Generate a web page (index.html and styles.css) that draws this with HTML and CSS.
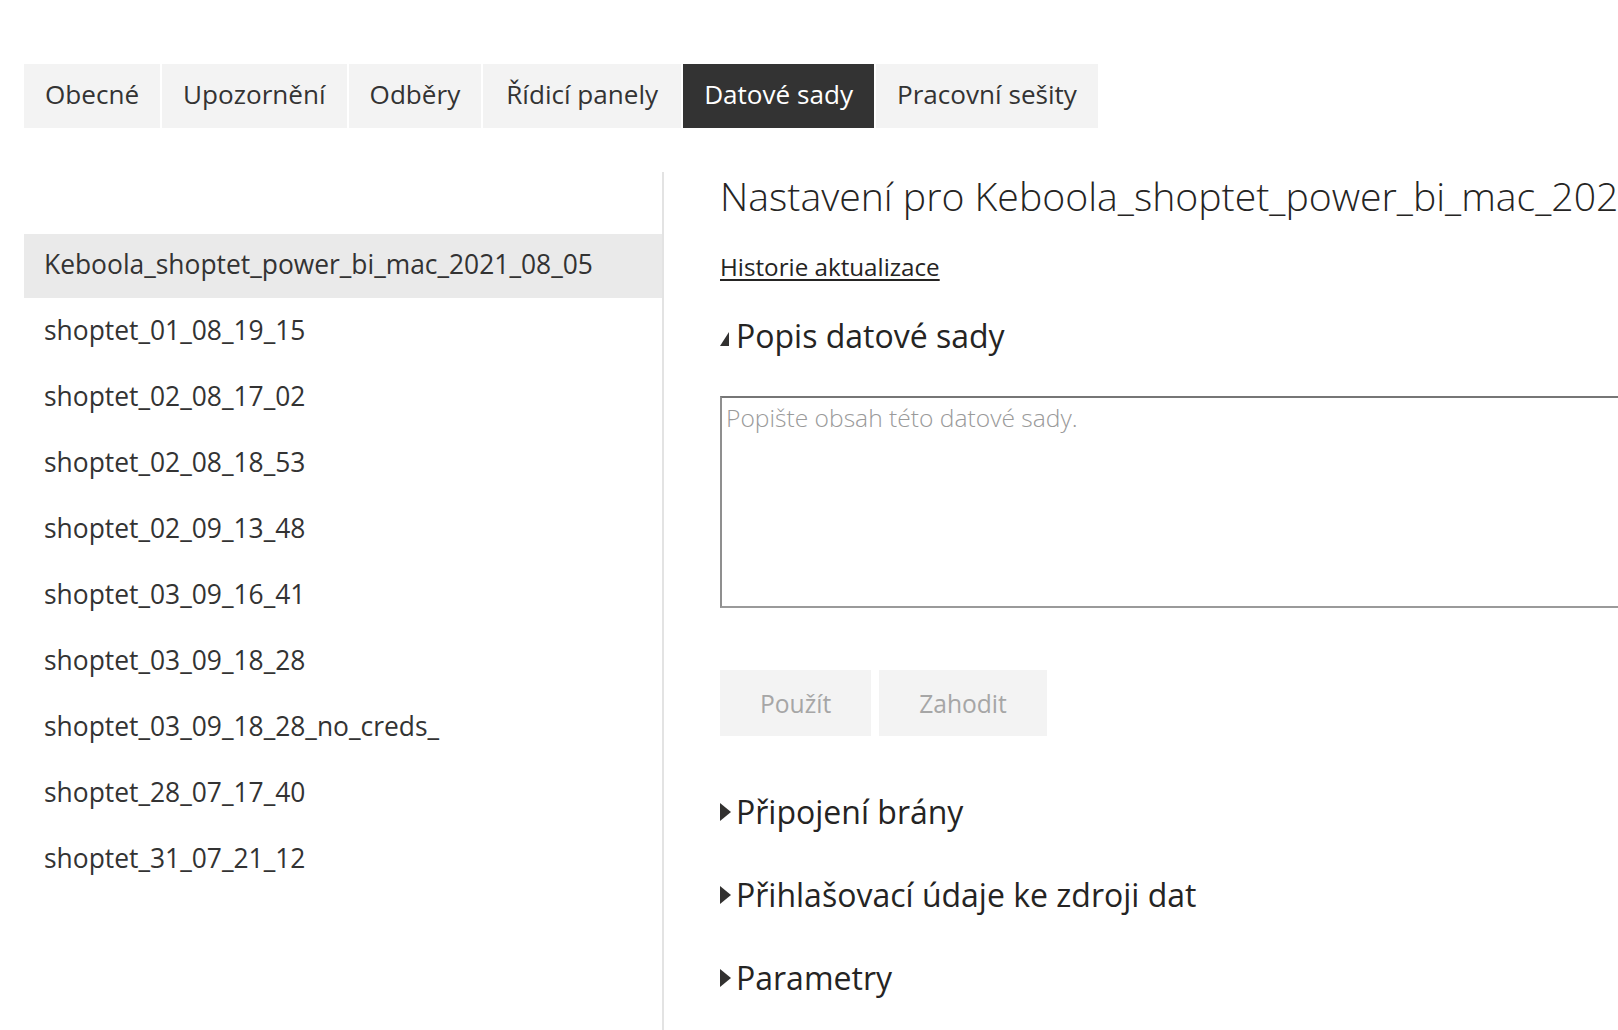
FILE: index.html
```html
<!DOCTYPE html>
<html lang="cs">
<head>
<meta charset="utf-8">
<title>Nastavení – Datové sady</title>
<link rel="stylesheet" href="styles.css">
</head>
<body>
<div class="page">
  <nav class="tabs">
    <div class="tab">Obecné</div>
    <div class="tab">Upozornění</div>
    <div class="tab">Odběry</div>
    <div class="tab wide">Řídicí panely</div>
    <div class="tab active">Datové sady</div>
    <div class="tab">Pracovní sešity</div>
  </nav>
  <div class="main">
    <aside class="datasets">
      <ul class="dataset-list">
        <li class="dataset selected">Keboola_shoptet_power_bi_mac_2021_08_05</li>
        <li class="dataset">shoptet_01_08_19_15</li>
        <li class="dataset">shoptet_02_08_17_02</li>
        <li class="dataset">shoptet_02_08_18_53</li>
        <li class="dataset">shoptet_02_09_13_48</li>
        <li class="dataset">shoptet_03_09_16_41</li>
        <li class="dataset">shoptet_03_09_18_28</li>
        <li class="dataset">shoptet_03_09_18_28_no_creds_</li>
        <li class="dataset">shoptet_28_07_17_40</li>
        <li class="dataset">shoptet_31_07_21_12</li>
      </ul>
    </aside>
    <section class="settings">
      <h1 class="settings-title">Nastavení pro Keboola_shoptet_power_bi_mac_2021_08_05</h1>
      <a class="history-link" href="#">Historie aktualizace</a>
      <div class="section-header expanded">
        <span class="caret"><svg width="9" height="14" viewBox="0 0 9 14"><polygon points="9,0 9,14 0,14" fill="#323130"/></svg></span>
        <span>Popis datové sady</span>
      </div>
      <textarea class="description" placeholder="Popište obsah této datové sady."></textarea>
      <div class="actions">
        <button class="btn" disabled>Použít</button>
        <button class="btn" disabled>Zahodit</button>
      </div>
      <div class="section-header collapsed">
        <span class="caret"><svg width="11" height="18" viewBox="0 0 11 18"><polygon points="0,0 11,9 0,18" fill="#323130"/></svg></span>
        <span>Připojení brány</span>
      </div>
      <div class="section-header collapsed">
        <span class="caret"><svg width="11" height="18" viewBox="0 0 11 18"><polygon points="0,0 11,9 0,18" fill="#323130"/></svg></span>
        <span>Přihlašovací údaje ke zdroji dat</span>
      </div>
      <div class="section-header collapsed">
        <span class="caret"><svg width="11" height="18" viewBox="0 0 11 18"><polygon points="0,0 11,9 0,18" fill="#323130"/></svg></span>
        <span>Parametry</span>
      </div>
    </section>
  </div>
</div>
</body>
</html>
```
FILE: styles.css
```css
html, body {
  margin: 0;
  padding: 0;
  overflow: hidden;
  background: #ffffff;
}

body {
  font-family: "Open Sans", "Noto Sans", "Liberation Sans", sans-serif;
  color: #323130;
}

.page {
  padding: 64px 0 0 24px;
}

.tabs {
  display: flex;
  gap: 2px;
  height: 64px;
}

.tab {
  display: flex;
  align-items: center;
  padding: 0 21px 5px;
  background: #f3f3f3;
  font-size: 26.1px;
  color: #333333;
}

.tab.wide {
  padding: 0 23px 5px;
}

.tab.active {
  background: #333333;
  color: #ffffff;
}

.main {
  display: flex;
  margin-top: 44px;
  height: calc(100vh - 172px);
}

.datasets {
  flex: none;
  width: 638px;
  padding-top: 62px;
  border-right: 2px solid #e3e3e3;
}

.dataset-list {
  list-style: none;
  margin: 0;
  padding: 0;
  display: flex;
  flex-direction: column;
  gap: 2px;
}

.dataset {
  display: flex;
  align-items: center;
  box-sizing: border-box;
  height: 64px;
  padding: 0 0 5px 20px;
  font-size: 26.4px;
  color: #333333;
  white-space: nowrap;
}

.dataset.selected {
  background: #eaeaea;
}

.settings {
  flex: 1;
  min-width: 0;
  overflow: hidden;
  padding-left: 56px;
}

.settings-title {
  margin: 0;
  font-size: 39.2px;
  font-weight: 300;
  line-height: 48px;
  white-space: nowrap;
  color: #252423;
}

.history-link {
  display: block;
  width: max-content;
  margin-top: 31px;
  font-size: 24.2px;
  line-height: 32px;
  color: #252423;
  text-decoration: underline;
  text-underline-offset: 3px;
}

.section-header {
  display: flex;
  align-items: center;
  font-size: 32px;
  line-height: 40px;
  color: #252423;
  white-space: nowrap;
}

.section-header.expanded {
  margin-top: 33px;
}

.section-header.collapsed {
  margin-top: 43px;
}

.actions + .section-header.collapsed {
  margin-top: 56px;
}

.caret {
  flex: none;
  width: 16px;
  display: flex;
  align-items: center;
}

.section-header.expanded .caret svg {
  margin-top: 5px;
}

.description {
  display: block;
  margin-top: 40px;
  width: 1000px;
  height: 212px;
  box-sizing: border-box;
  border: 2px solid #8f8f8f;
  border-top-color: #767676;
  border-bottom-color: #9a9a9a;
  padding: 4px 4px;
  font-family: "Open Sans", "Noto Sans", sans-serif;
  font-size: 24.6px;
  font-weight: 300;
  line-height: 32px;
  resize: none;
  outline: none;
  background: #ffffff;
}

.description::placeholder {
  color: #9a9a9a;
}

.actions {
  display: flex;
  gap: 8px;
  margin-top: 62px;
}

.btn {
  height: 66px;
  padding: 0 40px;
  border: 0;
  background: #f3f3f3;
  color: #a6a6a6;
  font-family: "Open Sans", "Noto Sans", sans-serif;
  font-size: 24.6px;
}
```
